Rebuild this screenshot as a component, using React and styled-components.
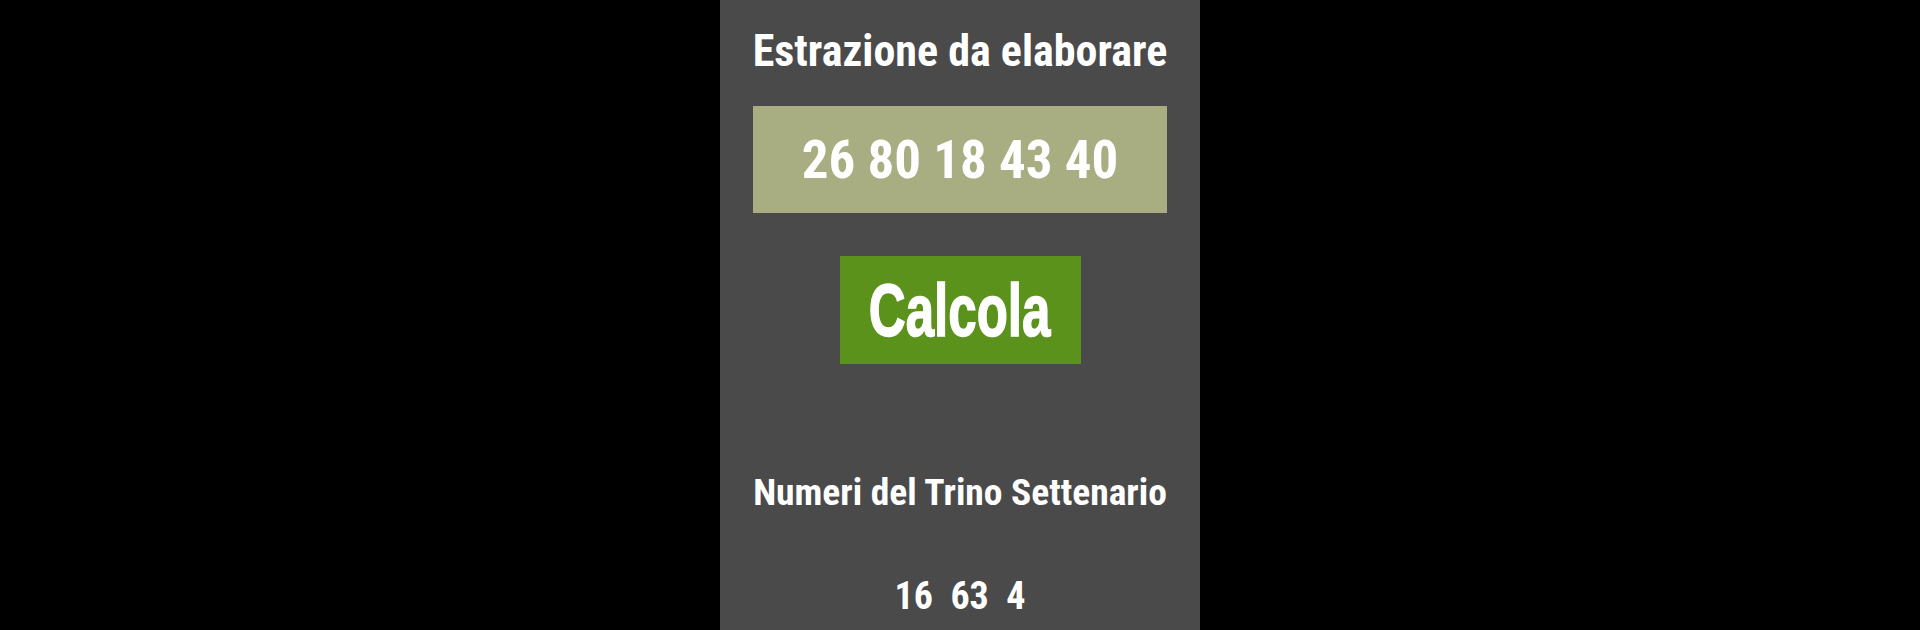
import React from "react"
import styled, { createGlobalStyle } from "styled-components"

const GlobalStyle = createGlobalStyle`
  html, body {
    margin: 0;
    padding: 0;
    background: #000;
  }
  #root {
    height: 630px;
  }
`

const Page = styled.div`
  display: flex;
  justify-content: center;
  height: 630px;
  background: #000;
`

const Panel = styled.div`
  width: 480px;
  height: 100%;
  background: #4a4a4a;
  display: flex;
  flex-direction: column;
  align-items: center;
  padding-top: 29px;
  box-sizing: border-box;
  color: #fff;
  font-family: Roboto, "Noto Sans", sans-serif;
  font-weight: 700;
`

const Label = styled.div`
  font-size: ${p => p.size}px;
  line-height: 1;
  margin-top: ${p => p.top || 0}px;
  white-space: pre;
  font-stretch: condensed;
`

const DrawBox = styled.div`
  width: 414px;
  height: 107px;
  margin-top: 33px;
  background: #a8ae81;
  display: flex;
  align-items: center;
  justify-content: center;
  padding-top: 2px;
  box-sizing: border-box;
`

const CalcButton = styled.button`
  width: 241px;
  height: 108px;
  margin-top: 43px;
  border: 0;
  padding: 0;
  background: #5b921c;
  color: #fff;
  display: flex;
  align-items: center;
  justify-content: center;
  font-family: "Liberation Sans", Arial, sans-serif;
  font-weight: 700;
  font-size: 74px;
  cursor: pointer;
`

const ButtonText = styled.span`
  display: inline-block;
  transform: scaleX(0.69);
  -webkit-text-stroke: 1.5px #fff;
`

export default function App() {
  return (
    <>
      <GlobalStyle />
      <Page>
        <Panel>
          <Label size={44}>Estrazione da elaborare</Label>
          <DrawBox>
            <Label size={53}>26 80 18 43 40</Label>
          </DrawBox>
          <CalcButton>
            <ButtonText>Calcola</ButtonText>
          </CalcButton>
          <Label size={37.5} top={110}>Numeri del Trino Settenario</Label>
          <Label size={38} top={65}>16  63  4</Label>
        </Panel>
      </Page>
    </>
  )
}
